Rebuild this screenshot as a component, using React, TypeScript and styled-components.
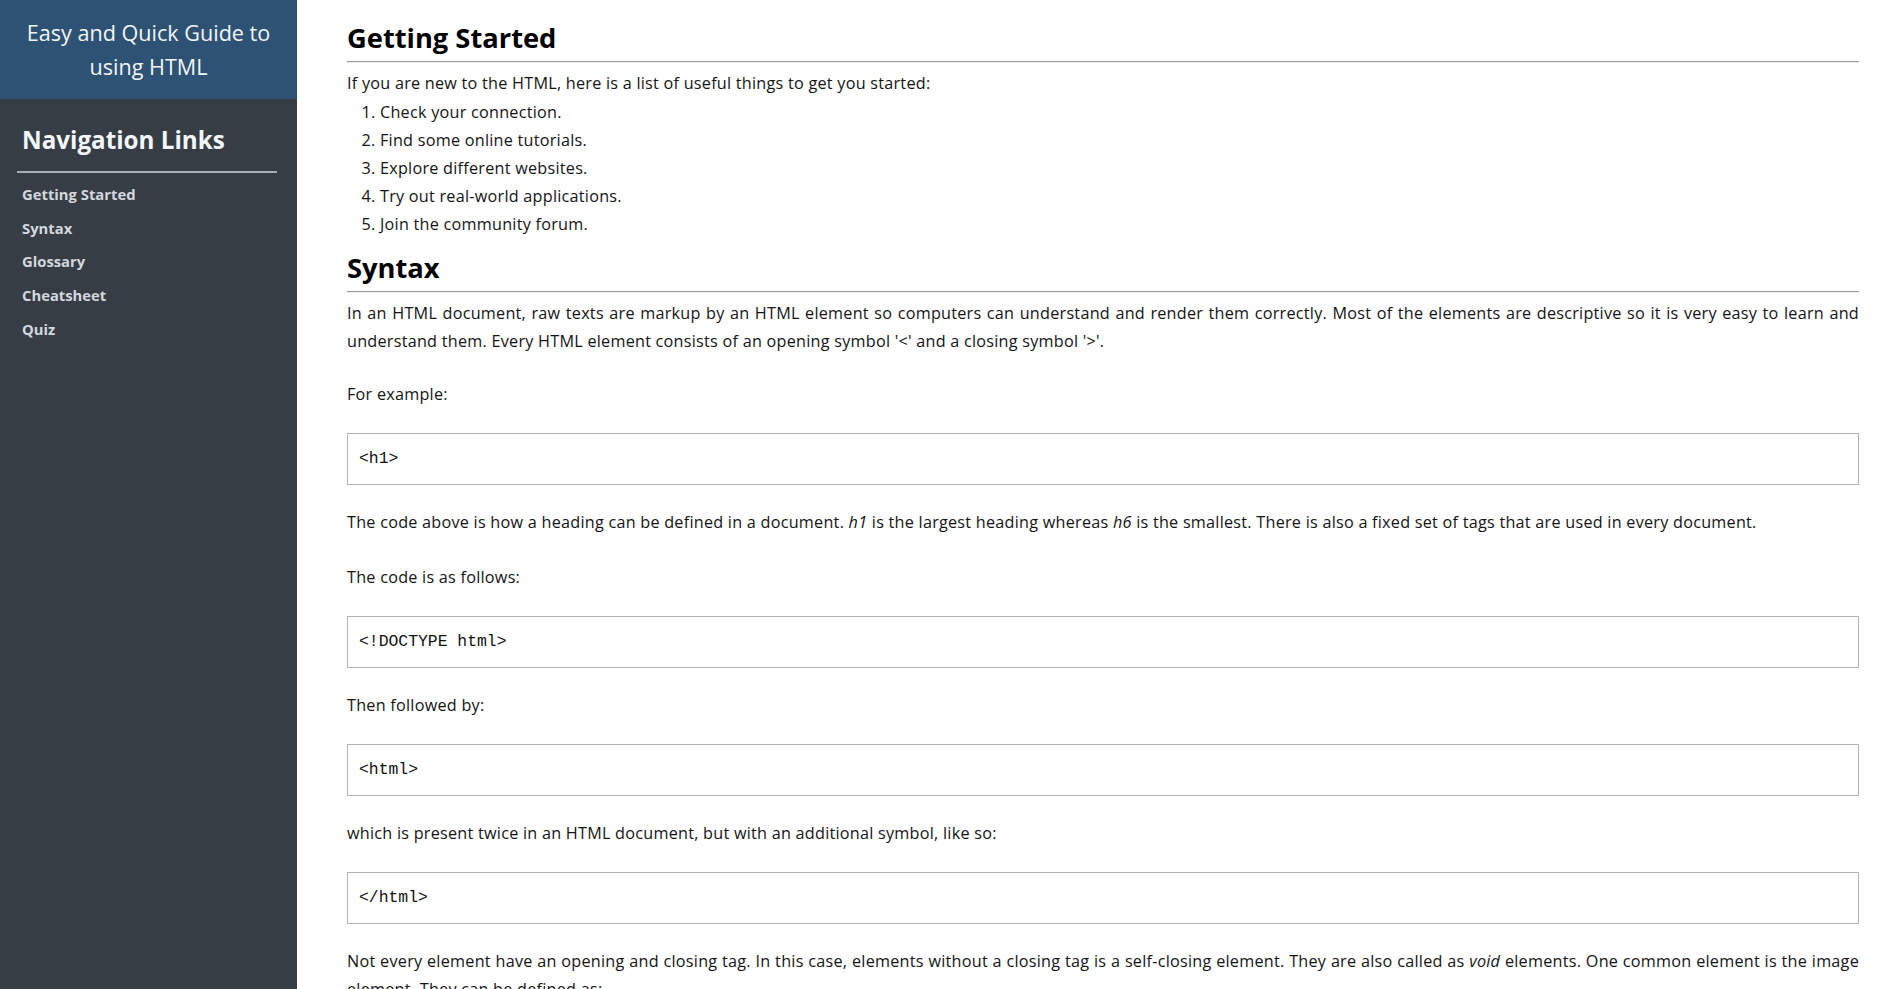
import React from "react";
import styled, { createGlobalStyle } from "styled-components";

const GlobalStyle = createGlobalStyle`
  html, body { margin: 0; padding: 0; }
  html { scrollbar-width: none; }
  html::-webkit-scrollbar, body::-webkit-scrollbar { display: none; }
  body {
    font-family: "Open Sans", "Noto Sans", sans-serif;
    background: #ffffff;
    color: #141414;
  }
`;

const Page = styled.div`
  display: grid;
  grid-template-columns: 297px 1fr;
  min-height: 100vh;
`;

const Sidebar = styled.nav`
  background: #363d45;
  display: flex;
  flex-direction: column;
`;

const SideHeader = styled.header`
  background: #2e5273;
  height: 99px;
  box-sizing: border-box;
  display: flex;
  align-items: center;
  justify-content: center;
  text-align: center;
  color: #f2f6fa;
  font-size: 21.6px;
  line-height: 34px;
  font-weight: 400;
  padding: 0 20px;
`;

const SideBody = styled.div`
  padding: 26px 20px 0 17px;
  display: flex;
  flex-direction: column;
`;

const SideTitle = styled.h2`
  margin: 0 0 0 5px;
  font-size: 24.2px;
  line-height: 30px;
  font-weight: 700;
  color: #f4f7fb;
`;

const SideRule = styled.div`
  height: 2px;
  background: #a9aeb4;
  margin: 16px 0 5px;
`;

const NavLink = styled.a`
  display: block;
  margin-left: 5px;
  padding: 7px 0;
  line-height: 19.7px;
  font-size: 14.8px;
  font-weight: 700;
  color: #d3d8de;
  text-decoration: none;
`;

const Main = styled.main`
  padding: 21px 41px 40px 50px;
  min-width: 0;
`;

const Section = styled.section`
  display: flex;
  flex-direction: column;
  margin-bottom: 12px;
`;

const Heading = styled.h1`
  margin: 0;
  font-size: 27.3px;
  line-height: 34px;
  font-weight: 700;
  color: #000;
`;

const Rule = styled.hr`
  margin: 6px 0 6px;
  border: 0;
  border-top: 1px solid #9a9a9a;
  border-bottom: 1px solid #eeeeee;
`;

const Para = styled.p<{ $after?: number }>`
  margin: 0 0 ${(p) => (p.$after ?? 25)}px;
  font-size: 16.2px;
  letter-spacing: 0.25px;
  line-height: 28px;
  text-align: justify;
`;

const Intro = styled(Para)`
  margin: 0 0 2px;
`;

const List = styled.ol`
  margin: 0;
  padding-left: 33px;
  font-size: 16.2px;
  letter-spacing: 0.25px;
  line-height: 27.9px;
`;

const CodeBlock = styled.pre`
  margin: 0 0 23px;
  height: 52px;
  box-sizing: border-box;
  border: 1px solid #b3b3b3;
  padding: 0 11px;
  display: flex;
  align-items: center;
  font-family: "Liberation Mono", "DejaVu Sans Mono", monospace;
  font-size: 16.4px;
  color: #111;
`;

const steps = [
  "Check your connection.",
  "Find some online tutorials.",
  "Explore different websites.",
  "Try out real-world applications.",
  "Join the community forum.",
];

const links = ["Getting Started", "Syntax", "Glossary", "Cheatsheet", "Quiz"];

export default function App() {
  return (
    <>
      <GlobalStyle />
      <Page>
        <Sidebar>
          <SideHeader>Easy and Quick Guide to using HTML</SideHeader>
          <SideBody>
            <SideTitle>Navigation Links</SideTitle>
            <SideRule />
            {links.map((l) => (
              <NavLink key={l} href={`#${l.replace(/\s/g, "_")}`}>
                {l}
              </NavLink>
            ))}
          </SideBody>
        </Sidebar>
        <Main>
          <Section id="Getting_Started">
            <Heading>Getting Started</Heading>
            <Rule />
            <Intro>If you are new to the HTML, here is a list of useful things to get you started:</Intro>
            <List>
              {steps.map((s) => (
                <li key={s}>{s}</li>
              ))}
            </List>
          </Section>
          <Section id="Syntax">
            <Heading>Syntax</Heading>
            <Rule />
            <Para>
              In an HTML document, raw texts are markup by an HTML element so computers can understand and render
              them correctly. Most of the elements are descriptive so it is very easy to learn and understand them.
              Every HTML element consists of an opening symbol '&lt;' and a closing symbol '&gt;'.
            </Para>
            <Para>For example:</Para>
            <CodeBlock>{"<h1>"}</CodeBlock>
            <Para $after={27}>
              The code above is how a heading can be defined in a document. <em>h1</em> is the largest heading whereas{" "}
              <em>h6</em> is the smallest. There is also a fixed set of tags that are used in every document.
            </Para>
            <Para>The code is as follows:</Para>
            <CodeBlock>{"<!DOCTYPE html>"}</CodeBlock>
            <Para>Then followed by:</Para>
            <CodeBlock>{"<html>"}</CodeBlock>
            <Para>which is present twice in an HTML document, but with an additional symbol, like so:</Para>
            <CodeBlock>{"</html>"}</CodeBlock>
            <Para>
              Not every element have an opening and closing tag. In this case, elements without a closing tag is a
              self-closing element. They are also called as <em>void</em> elements. One common element is the image
              element. They can be defined as:
            </Para>
            <CodeBlock>{"<img>"}</CodeBlock>
          </Section>
        </Main>
      </Page>
    </>
  );
}
